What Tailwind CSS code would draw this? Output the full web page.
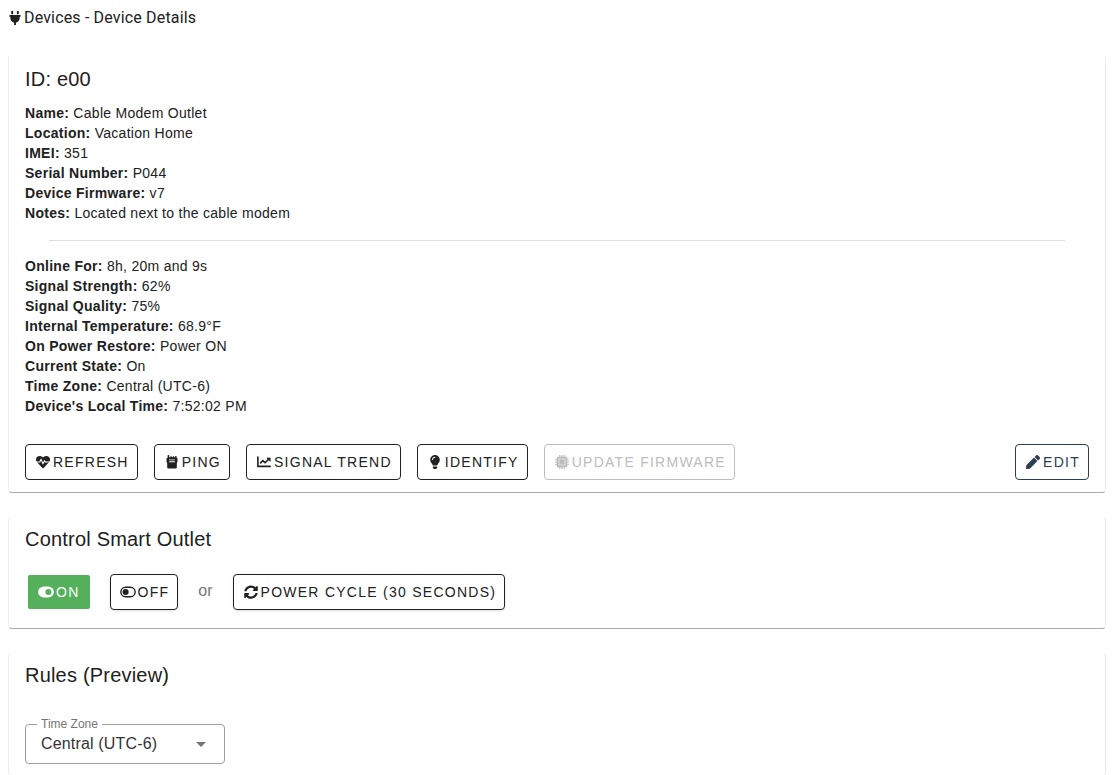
<!DOCTYPE html>
<html lang="en">
<head>
    <meta charset="UTF-8">
    <meta name="viewport" content="width=device-width, initial-scale=1.0">
    <title>Devices - Device Details</title>
    <script src="https://cdn.jsdelivr.net/npm/@tailwindcss/browser@4"></script>
</head>
<body class="bg-white text-[#212121] font-['Liberation_Sans',Arial,sans-serif] overflow-x-hidden">
    <header class="flex items-center h-9 pl-[9px] font-[Roboto,sans-serif]">
        <svg class="w-3 h-[15px] mr-[3px]" viewBox="64 0 384 512" fill="currentColor" aria-hidden="true"><path d="M128 0h64v112h-64zM320 0h64v112h-64zM80 136h352c10 0 16 7 16 16v32c0 9-6 16-16 16h-16v40c0 77-55 142-128 157v83h-64v-83c-73-15-128-80-128-157v-40H80c-10 0-16-7-16-16v-32c0-9 6-16 16-16z"/></svg>
        <h1 class="text-base tracking-[0.01em]">Devices - Device Details</h1>
    </header>

    <main class="flex flex-col gap-6 pl-2 pr-[10px] pt-[19px]">
        <!-- Device details -->
        <section class="px-4 pt-2 pb-3 border-x border-b border-x-[#ececec] border-b-[#a8a8a8] rounded">
            <h2 class="text-xl leading-8 tracking-[0.01em]">ID: e00</h2>
            <div class="pt-2 text-sm leading-5 tracking-[0.02em]">
                <p><strong>Name:</strong> Cable Modem Outlet</p>
                <p><strong>Location:</strong> Vacation Home</p>
                <p><strong>IMEI:</strong> 351</p>
                <p><strong>Serial Number:</strong> P044</p>
                <p><strong>Device Firmware:</strong> v7</p>
                <p><strong>Notes:</strong> Located next to the cable modem</p>
            </div>
            <hr class="mx-6 mt-[17px] mb-[15px] border-[#dedede]">
            <div class="text-sm leading-5 tracking-[0.02em]">
                <p><strong>Online For:</strong> 8h, 20m and 9s</p>
                <p><strong>Signal Strength:</strong> 62%</p>
                <p><strong>Signal Quality:</strong> 75%</p>
                <p><strong>Internal Temperature:</strong> 68.9°F</p>
                <p><strong>On Power Restore:</strong> Power ON</p>
                <p><strong>Current State:</strong> On</p>
                <p><strong>Time Zone:</strong> Central (UTC-6)</p>
                <p><strong>Device's Local Time:</strong> 7:52:02 PM</p>
            </div>
            <div class="flex flex-wrap gap-4 pt-7 text-sm">
                <button class="flex items-center h-9 pl-[9px] pr-2 border border-[#212121] rounded uppercase tracking-[0.09em]">
                    <span class="flex justify-center w-4 mr-0.5"><svg class="w-[14px] h-[14px]" viewBox="0 0 512 512" aria-hidden="true"><path fill="currentColor" d="M474 74C419 18 330 18 275 74l-19 20-19-20C182 18 93 18 38 74c-52 54-52 140 0 194l204 214c8 8 20 8 28 0l204-214c52-54 52-140 0-194z"/><path d="M0 256h140l44-104 70 172 60-116 28 48h170" fill="none" stroke="white" stroke-width="40" stroke-linejoin="round"/></svg></span>
                    Refresh
                </button>
                <button class="flex items-center h-9 pl-[9px] pr-2 border border-[#212121] rounded uppercase tracking-[0.09em]">
                    <span class="flex justify-center w-4 mr-0.5"><svg class="w-[14px] h-[14px]" viewBox="0 0 512 512" fill="currentColor" fill-rule="evenodd" aria-hidden="true"><path d="M96 16c0-9 7-16 16-16h24c9 0 16 7 16 16v64h40V64c0-9 7-16 16-16h24c9 0 16 7 16 16v16h32V64c0-9 7-16 16-16h24c9 0 16 7 16 16v16h32V48c0-9 7-16 16-16h24c9 0 16 7 16 16v48c18 0 32 14 32 32v128l-24 32v160c0 26-22 48-48 48H128c-26 0-48-22-48-48V288l-24-32V128c0-18 14-32 32-32h8zM152 160v32h208v-32zM152 232v32h208v-32z"/></svg></span>
                    Ping
                </button>
                <button class="flex items-center h-9 pl-[9px] pr-2 border border-[#212121] rounded uppercase tracking-[0.09em]">
                    <span class="flex justify-center w-4 mr-0.5"><svg class="w-[14px] h-[14px]" viewBox="0 0 512 512" fill="none" stroke="currentColor" stroke-width="60" aria-hidden="true"><path stroke-linecap="round" stroke-linejoin="round" d="M32 80v336h448"/><path stroke-linejoin="round" stroke-linecap="round" d="M132 288l84-84 80 80 140-140"/><path fill="currentColor" stroke-width="24" stroke-linejoin="round" d="M360 108h124v124z"/></svg></span>
                    Signal Trend
                </button>
                <button class="flex items-center h-9 pl-[9px] pr-2 border border-[#212121] rounded uppercase tracking-[0.09em]">
                    <span class="flex justify-center w-4 mr-0.5"><svg class="w-[14px] h-[14px]" viewBox="0 0 512 512" fill="currentColor" aria-hidden="true"><path d="M176 454c0 4 1 7 3 10l25 37c3 7 8 11 14 11h76c6 0 11-4 14-11l25-37c2-3 3-6 3-10v-38H176zM80 176c0 44 16 85 44 116 16 19 43 60 52 92h160c9-32 36-73 52-92 28-31 44-72 44-116C432 78 353 0 256 0 155 0 80 82 80 176zm176-80c-44 0-80 36-80 80 0 9-7 16-16 16s-16-7-16-16c0-62 50-112 112-112 9 0 16 7 16 16s-7 16-16 16z"/></svg></span>
                    Identify
                </button>
                <button class="flex items-center h-9 pl-[9px] pr-2 border border-[#bdbdbd] rounded uppercase tracking-[0.09em] text-[#bdbdbd]" disabled>
                    <span class="flex justify-center w-4 mr-0.5"><svg class="w-[14px] h-[14px]" viewBox="0 0 512 512" fill="currentColor" fill-rule="evenodd" aria-hidden="true"><path d="M112 64h32V0h32v64h32V0h32v64h32V0h32v64h32V0h32v64h32c27 0 48 21 48 48v32h64v32h-64v32h64v32h-64v32h64v32h-64v32h64v32h-64v32c0 27-21 48-48 48h-32v64h-32v-64h-32v64h-32v-64h-32v64h-32v-64h-32v64h-32v-64h-32c-27 0-48-21-48-48v-32H0v-32h64v-32H0v-32h64v-32H0v-32h64v-32H0v-32h64v-32c0-27 21-48 48-48zM136 136v240h240V136zM156 156h200v200H156z"/></svg></span>
                    Update Firmware
                </button>
                <button class="flex items-center h-9 pl-[9px] pr-2 ml-auto border border-[#2c3e50] rounded uppercase tracking-[0.09em] text-[#2c3e50]">
                    <span class="flex justify-center w-4 mr-0.5"><svg class="w-[14px] h-[14px]" viewBox="0 0 512 512" fill="currentColor" aria-hidden="true"><path d="M291 93l128 128-278 278-114 13c-16 1-29-12-27-27l13-114zM498 74l-60-60c-19-19-49-19-68 0l-57 57 128 128 57-57c19-19 19-49 0-68z"/></svg></span>
                    Edit
                </button>
            </div>
        </section>

        <!-- Outlet control -->
        <section class="px-4 pt-1.5 pb-[18px] border-x border-b border-x-[#ececec] border-b-[#a8a8a8] rounded">
            <h2 class="text-xl leading-8 tracking-[0.01em]">Control Smart Outlet</h2>
            <div class="flex flex-wrap items-center gap-5 pt-[19px] pl-[3px] text-sm">
                <button class="flex items-center h-[34px] px-[10px] bg-[#55b05b] rounded-xs uppercase tracking-[0.09em] text-white">
                    <span class="flex justify-center w-4 mr-0.5"><svg class="w-4 h-[14px]" viewBox="0 0 576 512" aria-hidden="true"><rect y="56" width="576" height="400" rx="200" fill="currentColor"/><circle cx="376" cy="256" r="112" fill="#55b05b"/></svg></span>
                    On
                </button>
                <button class="flex items-center h-9 pl-[9px] pr-2 border border-[#212121] rounded uppercase tracking-[0.09em] shadow-sm">
                    <span class="flex justify-center w-4 mr-0.5"><svg class="w-4 h-[14px]" viewBox="0 0 576 512" aria-hidden="true"><rect x="26" y="82" width="524" height="348" rx="174" fill="none" stroke="currentColor" stroke-width="52"/><circle cx="200" cy="256" r="112" fill="currentColor"/></svg></span>
                    Off
                </button>
                <span class="text-base leading-5 pb-0.5 text-[#757575]">or</span>
                <button class="flex items-center h-9 pl-[9px] pr-2 border border-[#212121] rounded uppercase tracking-[0.09em] shadow-sm">
                    <span class="flex justify-center w-4 mr-0.5"><svg class="w-[14px] h-[14px]" viewBox="0 0 512 512" fill="currentColor" aria-hidden="true"><path d="M371 143c-31-29-71-45-114-45-78 0-145 53-164 126-1 5-6 9-12 9H24c-7 0-13-7-12-14C33 104 134 16 256 16c66 0 126 26 171 69l37-37c15-15 40-4 40 17v134c0 13-11 24-24 24H346c-21 0-32-25-17-40zM32 296h134c22 0 32 26 17 41l-41 41c31 29 71 45 114 45 78 0 145-53 163-126 2-5 6-9 12-9h57c8 0 13 7 12 14-21 115-122 202-244 202-66 0-126-26-171-69l-36 37c-15 15-41 4-41-17V320c0-13 11-24 24-24z"/></svg></span>
                    Power Cycle (30 Seconds)
                </button>
            </div>
        </section>

        <!-- Rules -->
        <section class="px-4 pt-1.5 pb-3 border-x border-x-[#ececec] rounded">
            <h2 class="text-xl leading-8 tracking-[0.01em]">Rules (Preview)</h2>
            <div class="relative w-[200px] mt-[33px]">
                <label for="time-zone" class="absolute left-3 -top-2 px-1 bg-white text-xs leading-4 text-[#757575]">Time Zone</label>
                <select id="time-zone" class="appearance-none block w-full h-10 px-[15px] border border-[#9e9e9e] rounded text-base tracking-[0.01em] text-[#333333]">
                    <option>Central (UTC-6)</option>
                </select>
                <svg class="absolute right-3 top-2 w-6 h-6 text-[#757575] pointer-events-none" viewBox="0 0 24 24" fill="currentColor" aria-hidden="true"><path d="M7 10l5 5 5-5H7z"/></svg>
            </div>
        </section>
    </main>
</body>
</html>
